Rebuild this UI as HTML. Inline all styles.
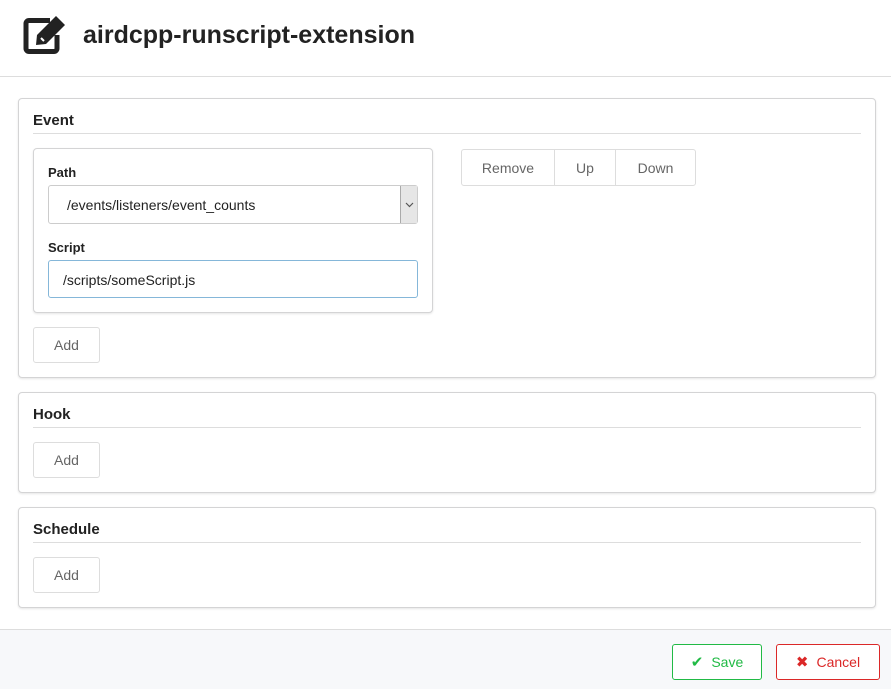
<!DOCTYPE html>
<html><head><style>
body{margin:0;width:891px;height:689px;background:#fff;font-family:"Liberation Sans",sans-serif;color:#222;position:relative;overflow:hidden}
.abs{position:absolute;box-sizing:border-box}
.seg{border:1px solid #d4d4d5;border-radius:4px;background:#fff;box-shadow:0 1px 2px rgba(0,0,0,.1)}
.h{font-weight:bold;font-size:15px}
.line{height:1px;background:#ddd}
.btn{border:1px solid #ddd;border-radius:3px;background:#fff;color:#666;font-size:14px;display:flex;align-items:center;justify-content:center}
.lbl{font-weight:bold;font-size:13px}
</style></head><body>
<svg class="abs" style="left:23px;top:14px" width="46" height="40" viewBox="0 0 46 40">
<path d="M27 6.5H6a3 3 0 0 0-3 3v25a3 3 0 0 0 3 3h25a3 3 0 0 0 3-3V21" fill="none" stroke="#222" stroke-width="5"/>
<path d="M14 21L33 2l9 9-19 19-10 1z" fill="#222"/>
<path d="M18 24l3 3" stroke="#fff" stroke-width="2"/>
</svg>
<div class="abs" style="left:83px;top:21px;font-size:25px;font-weight:bold;color:#222">airdcpp-runscript-extension</div>
<div class="abs line" style="left:0;top:76px;width:891px"></div>

<div class="abs seg" style="left:18px;top:98px;width:858px;height:280px"></div>
<div class="abs h" style="left:33px;top:112px">Event</div>
<div class="abs line" style="left:33px;top:133px;width:828px"></div>
<div class="abs seg" style="left:33px;top:148px;width:400px;height:165px"></div>
<div class="abs lbl" style="left:48px;top:165px">Path</div>
<div class="abs" style="left:48px;top:185px;width:370px;height:39px;border:1px solid #ccc;border-radius:3px;font-size:14px;padding:11px 0 0 18px">/events/listeners/event_counts</div>
<div class="abs" style="left:400px;top:186px;width:17px;height:37px;background:#e6e6e6;border-left:1px solid #aaa;text-align:center">
<svg width="9" height="6" viewBox="0 0 9 6" style="margin-top:16px"><path d="M1 1l3.5 3.5L8 1" fill="none" stroke="#555" stroke-width="1.2"/></svg></div>
<div class="abs lbl" style="left:48px;top:240px">Script</div>
<div class="abs" style="left:48px;top:260px;width:370px;height:38px;border:1px solid #85b7d9;border-radius:3px;font-size:14px;padding:11px 0 0 14px">/scripts/someScript.js</div>
<div class="abs btn" style="left:461px;top:149px;width:94px;height:37px;border-radius:3px 0 0 3px">Remove</div>
<div class="abs btn" style="left:554px;top:149px;width:62px;height:37px;border-radius:0">Up</div>
<div class="abs btn" style="left:615px;top:149px;width:81px;height:37px;border-radius:0 3px 3px 0">Down</div>
<div class="abs btn" style="left:33px;top:327px;width:67px;height:36px">Add</div>

<div class="abs seg" style="left:18px;top:392px;width:858px;height:101px"></div>
<div class="abs h" style="left:33px;top:406px">Hook</div>
<div class="abs line" style="left:33px;top:427px;width:828px"></div>
<div class="abs btn" style="left:33px;top:442px;width:67px;height:36px">Add</div>

<div class="abs seg" style="left:18px;top:507px;width:858px;height:101px"></div>
<div class="abs h" style="left:33px;top:521px">Schedule</div>
<div class="abs line" style="left:33px;top:542px;width:828px"></div>
<div class="abs btn" style="left:33px;top:557px;width:67px;height:36px">Add</div>

<div class="abs" style="left:0;top:629px;width:891px;height:60px;background:#f7f8fa;border-top:1px solid #ddd"></div>
<div class="abs btn" style="left:672px;top:644px;width:90px;height:36px;border-color:#21ba45;color:#21ba45"><span style="font-size:15px;margin-right:8px">&#10004;</span>Save</div>
<div class="abs btn" style="left:776px;top:644px;width:104px;height:36px;border-color:#db2828;color:#db2828"><span style="font-size:15px;margin-right:8px">&#10006;</span>Cancel</div>
</body></html>
